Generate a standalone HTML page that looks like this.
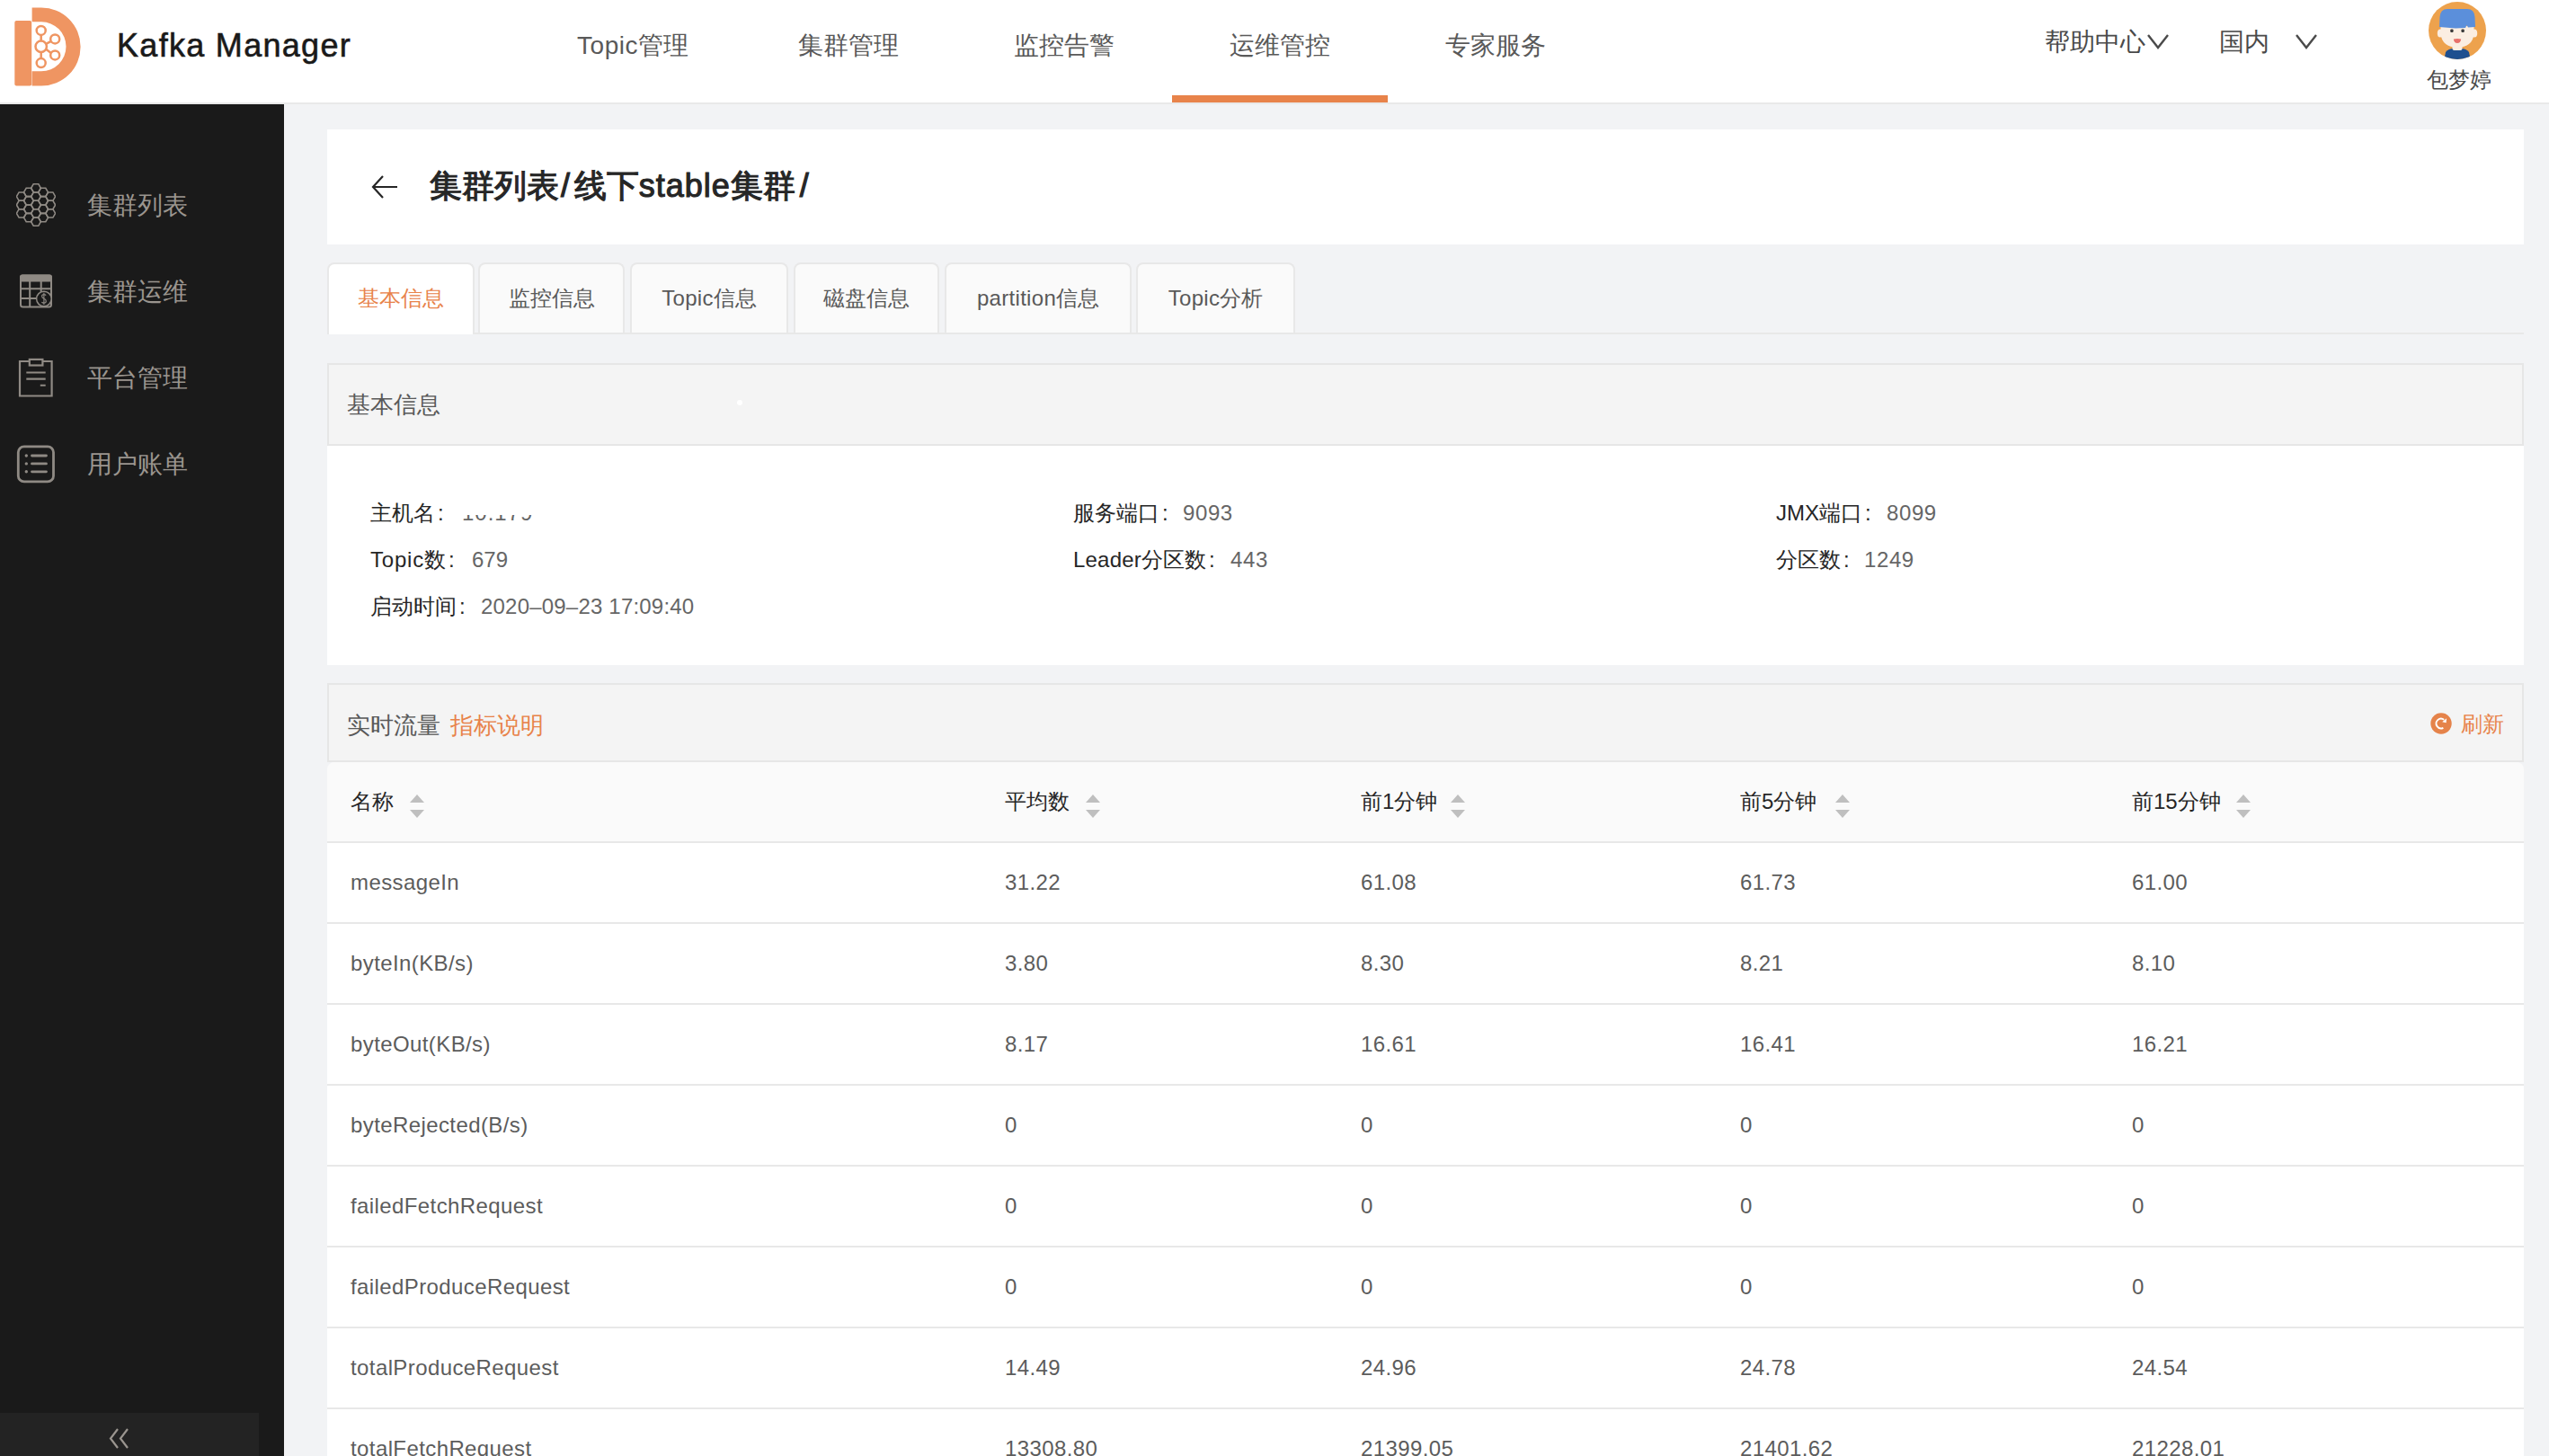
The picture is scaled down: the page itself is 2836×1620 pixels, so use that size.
<!DOCTYPE html>
<html><head><meta charset="utf-8">
<style>
*{box-sizing:border-box;margin:0;padding:0}
html,body{width:2836px;height:1620px;overflow:hidden;background:#f2f3f5;font-family:"Liberation Sans",sans-serif;}
.a{position:absolute}
.t{position:absolute;white-space:nowrap}
#hdr{left:0;top:0;width:2836px;height:116px;background:#fff;border-bottom:2px solid #e9e9e9}
#side{left:0;top:116px;width:316px;height:1504px;background:#1a1a1a}
.nav{top:3px;height:106px;line-height:96px;width:240px;text-align:center;font-size:28px;color:#595959;letter-spacing:0.5px}
.mi{left:97px;font-size:28px;color:#9a958f;height:40px;line-height:40px}
.card{background:#fff}
.tab{top:292px;height:78px;border:2px solid #e8e8e8;border-bottom:none;border-radius:8px 8px 0 0;background:#fafafa;font-size:24px;color:#595959;text-align:center;line-height:75px;letter-spacing:0.3px}
.tab.on{background:#fff;color:#e8834a;height:80px}
.lab{font-size:24px;color:#262626;height:30px;line-height:30px}
.val{color:#666}
.th{top:877px;font-size:24px;color:#262626;height:30px;line-height:30px}
.td{font-size:24px;color:#5c5c5c;height:30px;line-height:30px;letter-spacing:0.4px}
.rowb{left:364px;width:2444px;height:2px;background:#e8e8e8}
.sort{width:16px;height:26px}
.k{display:inline-block;width:1em;text-align:center;font-style:normal;letter-spacing:0}
</style></head><body>

<!-- HEADER -->
<div id="hdr" class="a">
  <svg class="a" style="left:0;top:0" width="100" height="110" viewBox="0 0 100 110">
    <rect x="16.3" y="23.1" width="18.9" height="72.5" rx="2" fill="#ef9562"/>
    <path d="M35.6 8.4 H46 A43.6 43.6 0 0 1 46 95.6 H35.6 V79.3 H46 A27.5 27.5 0 0 0 46 24.3 H35.6 Z" fill="#ef9562"/>
    <g fill="none" stroke="#ef9562" stroke-width="2.5">
      <circle cx="45.7" cy="51.8" r="6.2"/>
      <circle cx="45.7" cy="33.9" r="5"/>
      <circle cx="45.7" cy="70.1" r="5"/>
      <circle cx="61.2" cy="43.4" r="5"/>
      <circle cx="61.2" cy="61.4" r="5"/>
      <path d="M45.7 38.9 V45.6 M45.7 58 V65.1 M51.2 48.8 L56.8 45.8 M51.2 54.8 L56.8 58.9"/>
    </g>
  </svg>
  <div class="t" style="left:130px;top:30px;font-size:36px;color:#1a1a1a;letter-spacing:1.3px;line-height:42px;-webkit-text-stroke:0.6px #1a1a1a">Kafka Manager</div>
  <div class="t nav" style="left:584px">Topic<i class="k">管</i><i class="k">理</i></div>
  <div class="t nav" style="left:824px"><i class="k">集</i><i class="k">群</i><i class="k">管</i><i class="k">理</i></div>
  <div class="t nav" style="left:1064px"><i class="k">监</i><i class="k">控</i><i class="k">告</i><i class="k">警</i></div>
  <div class="t nav" style="left:1304px"><i class="k">运</i><i class="k">维</i><i class="k">管</i><i class="k">控</i></div>
  <div class="t nav" style="left:1544px"><i class="k">专</i><i class="k">家</i><i class="k">服</i><i class="k">务</i></div>
  <div class="a" style="left:1304px;top:106px;width:240px;height:8px;background:#e8834a"></div>

  <div class="t" style="left:2275px;top:29px;font-size:28px;color:#4a4a4a;line-height:36px"><i class="k">帮</i><i class="k">助</i><i class="k">中</i><i class="k">心</i></div>
  <svg class="a" style="left:2388px;top:37px" width="26" height="18" viewBox="0 0 26 18"><path d="M2 2 L13 16 L24 2" fill="none" stroke="#4a4a4a" stroke-width="2.4"/></svg>
  <div class="t" style="left:2469px;top:29px;font-size:28px;color:#4a4a4a;line-height:36px"><i class="k">国</i><i class="k">内</i></div>
  <svg class="a" style="left:2553px;top:37px" width="26" height="18" viewBox="0 0 26 18"><path d="M2 2 L13 16 L24 2" fill="none" stroke="#4a4a4a" stroke-width="2.4"/></svg>

  <svg class="a" style="left:2702px;top:2px" width="64" height="64" viewBox="0 0 64 64">
    <defs><clipPath id="cc"><circle cx="32" cy="32" r="32"/></clipPath></defs>
    <g clip-path="url(#cc)">
      <rect width="64" height="64" fill="#eda24d"/>
      <path d="M17 66 L19 56 Q22 52 28 52 L36 52 Q42 52 45 56 L47 66 Z" fill="#1e4f8f"/>
      <rect x="26.5" y="47" width="11" height="7" rx="2" fill="#fbeee2"/>
      <ellipse cx="13" cy="35" rx="3.2" ry="4.5" fill="#fbeee2"/>
      <ellipse cx="51" cy="35" rx="3.2" ry="4.5" fill="#fbeee2"/>
      <path d="M13.5 27 L13.5 36 Q15 50 32 51 Q49 50 50.5 36 L50.5 27 Z" fill="#fbeee2"/>
      <path d="M12 28 L12.5 17 Q13 8 21 8 L43 8 Q51 8 51.5 17 L52 28 L44 28.5 L42.5 26 L41 29 L30 29.5 Z" fill="#5b8fdb"/>
      <rect x="24.2" y="30.6" width="3.4" height="3.4" rx="1.2" fill="#3a3a3a"/>
      <rect x="36.4" y="30.6" width="3.4" height="3.4" rx="1.2" fill="#3a3a3a"/>
      <path d="M27.8 41.5 Q32 40.5 36.2 41.5 Q35.5 46 32 46 Q28.5 46 27.8 41.5 Z" fill="#e8706a"/>
    </g>
  </svg>
  <div class="t" style="left:2700px;top:73px;font-size:24px;color:#4a4a4a;line-height:32px;letter-spacing:-0.5px"><i class="k">包</i><i class="k">梦</i><i class="k">婷</i></div>
</div>

<!-- SIDEBAR -->
<div id="side" class="a">
  <svg class="a" style="left:18px;top:88px" width="44" height="48" viewBox="0 0 44 48">
    <g fill="none" stroke="#8f8a84" stroke-width="1.6"><polygon points="11.20,14.65 8.50,19.32 3.10,19.32 0.40,14.65 3.10,9.97 8.50,9.97"/><polygon points="11.20,24.00 8.50,28.68 3.10,28.68 0.40,24.00 3.10,19.32 8.50,19.32"/><polygon points="11.20,33.35 8.50,38.03 3.10,38.03 0.40,33.35 3.10,28.68 8.50,28.68"/><polygon points="19.30,9.97 16.60,14.65 11.20,14.65 8.50,9.97 11.20,5.29 16.60,5.29"/><polygon points="19.30,19.32 16.60,24.00 11.20,24.00 8.50,19.32 11.20,14.65 16.60,14.65"/><polygon points="19.30,28.68 16.60,33.35 11.20,33.35 8.50,28.68 11.20,24.00 16.60,24.00"/><polygon points="19.30,38.03 16.60,42.71 11.20,42.71 8.50,38.03 11.20,33.35 16.60,33.35"/><polygon points="27.40,5.29 24.70,9.97 19.30,9.97 16.60,5.29 19.30,0.62 24.70,0.62"/><polygon points="27.40,14.65 24.70,19.32 19.30,19.32 16.60,14.65 19.30,9.97 24.70,9.97"/><polygon points="27.40,24.00 24.70,28.68 19.30,28.68 16.60,24.00 19.30,19.32 24.70,19.32"/><polygon points="27.40,33.35 24.70,38.03 19.30,38.03 16.60,33.35 19.30,28.68 24.70,28.68"/><polygon points="27.40,42.71 24.70,47.38 19.30,47.38 16.60,42.71 19.30,38.03 24.70,38.03"/><polygon points="35.50,9.97 32.80,14.65 27.40,14.65 24.70,9.97 27.40,5.29 32.80,5.29"/><polygon points="35.50,19.32 32.80,24.00 27.40,24.00 24.70,19.32 27.40,14.65 32.80,14.65"/><polygon points="35.50,28.68 32.80,33.35 27.40,33.35 24.70,28.68 27.40,24.00 32.80,24.00"/><polygon points="35.50,38.03 32.80,42.71 27.40,42.71 24.70,38.03 27.40,33.35 32.80,33.35"/><polygon points="43.60,14.65 40.90,19.32 35.50,19.32 32.80,14.65 35.50,9.97 40.90,9.97"/><polygon points="43.60,24.00 40.90,28.68 35.50,28.68 32.80,24.00 35.50,19.32 40.90,19.32"/><polygon points="43.60,33.35 40.90,38.03 35.50,38.03 32.80,33.35 35.50,28.68 40.90,28.68"/></g>
  </svg>
  <div class="t mi" style="top:93px"><i class="k">集</i><i class="k">群</i><i class="k">列</i><i class="k">表</i></div>
  <svg class="a" style="left:20px;top:188px" width="42" height="42" viewBox="0 0 42 42">
    <g fill="none" stroke="#8f8a84" stroke-width="2">
      <rect x="3" y="2.5" width="34" height="35" rx="2.5"/>
      <path d="M3 17.25 H37 M3 28 H30 M13.2 8 V37.5 M25.7 8 V28"/>
    </g>
    <rect x="2" y="1.5" width="36" height="8" rx="2.5" fill="#8f8a84"/>
    <circle cx="28.9" cy="28.5" r="8.3" fill="#1a1a1a" stroke="#8f8a84" stroke-width="1.5"/>
    <path d="M31.2 24.6 Q30.3 23.6 28.9 23.6 Q26.6 23.6 26.6 25.6 Q26.6 27.4 28.9 28.3 Q31.3 29.2 31.3 31.1 Q31.3 33.2 28.9 33.2 Q27.3 33.2 26.4 32.2 M28.9 21.8 V35" fill="none" stroke="#8f8a84" stroke-width="1.1"/>
  </svg>
  <div class="t mi" style="top:189px"><i class="k">集</i><i class="k">群</i><i class="k">运</i><i class="k">维</i></div>
  <svg class="a" style="left:20px;top:282px" width="42" height="46" viewBox="0 0 42 46">
    <g fill="none" stroke="#8f8a84" stroke-width="2.2">
      <path d="M12.8 4 H2 V42.5 H37.6 V4 H27.4"/>
      <rect x="12.8" y="1.9" width="14.6" height="6.6"/>
      <path d="M9.3 16.5 H30.7 M9.3 23.6 H30.7 M24.8 30.75 H30.7"/>
    </g>
  </svg>
  <div class="t mi" style="top:285px"><i class="k">平</i><i class="k">台</i><i class="k">管</i><i class="k">理</i></div>
  <svg class="a" style="left:18px;top:378px" width="44" height="46" viewBox="0 0 44 46">
    <rect x="2.3" y="2.8" width="39.2" height="39.1" rx="6.5" fill="none" stroke="#8f8a84" stroke-width="2.8"/>
    <path d="M17.5 13 H33.5 M17.5 21.9 H33.5 M17.5 30.8 H33.5" fill="none" stroke="#8f8a84" stroke-width="2.8" stroke-linecap="round"/>
    <g fill="#8f8a84"><circle cx="11.3" cy="13" r="1.7"/><circle cx="11.3" cy="21.9" r="1.7"/><circle cx="11.3" cy="30.8" r="1.7"/></g>
  </svg>
  <div class="t mi" style="top:381px"><i class="k">用</i><i class="k">户</i><i class="k">账</i><i class="k">单</i></div>
  <div class="a" style="left:0;top:1456px;width:288px;height:48px;background:#232323"></div>
  <svg class="a" style="left:120px;top:1472px" width="28" height="26" viewBox="0 0 28 26">
    <path d="M11 2 L3 12.5 L11 23 M22 2 L14 12.5 L22 23" fill="none" stroke="#9a958f" stroke-width="2.2"/>
  </svg>
</div>

<!-- TITLE CARD -->
<div class="a card" style="left:364px;top:144px;width:2444px;height:128px"></div>
<svg class="a" style="left:412px;top:192px" width="32" height="32" viewBox="0 0 32 32">
  <path d="M30 16 H4 M14 4 L3 16 L14 28" fill="none" stroke="#262626" stroke-width="2.2"/>
</svg>
<div class="t" style="left:478px;top:186px;font-size:36px;font-weight:normal;color:#262626;line-height:42px;letter-spacing:0.75px;-webkit-text-stroke:1.1px #262626"><i class="k">集</i><i class="k">群</i><i class="k">列</i><i class="k">表</i><span style="margin:0 4px 0 2px">/</span><i class="k">线</i><i class="k">下</i><span style="letter-spacing:1px">stable</span><i class="k">集</i><i class="k">群</i><span style="margin:0 0 0 5px">/</span></div>

<!-- TABS -->
<div class="a" style="left:364px;top:370px;width:2444px;height:2px;background:#e8e8e8"></div>
<div class="t tab on" style="left:364px;width:164px"><i class="k">基</i><i class="k">本</i><i class="k">信</i><i class="k">息</i></div>
<div class="t tab" style="left:532px;width:163px"><i class="k">监</i><i class="k">控</i><i class="k">信</i><i class="k">息</i></div>
<div class="t tab" style="left:701px;width:176px">Topic<i class="k">信</i><i class="k">息</i></div>
<div class="t tab" style="left:883px;width:162px"><i class="k">磁</i><i class="k">盘</i><i class="k">信</i><i class="k">息</i></div>
<div class="t tab" style="left:1051px;width:208px">partition<i class="k">信</i><i class="k">息</i></div>
<div class="t tab" style="left:1264px;width:177px">Topic<i class="k">分</i><i class="k">析</i></div>

<!-- INFO CARD -->
<div class="a" style="left:364px;top:404px;width:2444px;height:92px;background:#f4f4f4;border:2px solid #e6e6e6"></div>
<div class="t" style="left:386px;top:435px;font-size:26px;color:#595959;line-height:30px"><i class="k">基</i><i class="k">本</i><i class="k">信</i><i class="k">息</i></div>
<div class="a card" style="left:364px;top:496px;width:2444px;height:244px"></div>
<div class="a" style="left:820px;top:445px;width:6px;height:6px;border-radius:3px;background:#fff"></div>
<div class="t lab" style="left:412px;top:556px"><i class="k">主</i><i class="k">机</i><i class="k">名</i><span style="margin-left:3px">:</span></div>
<div class="a" style="left:514px;top:573px;width:80px;height:6px;overflow:hidden"><div class="t" style="left:0;top:-17px;font-size:24px;line-height:30px;color:#666;letter-spacing:1px">10.179.3..</div></div>
<div class="t lab" style="left:412px;top:608px;letter-spacing:0.8px">Topic<i class="k">数</i><span style="margin-left:3px">:</span></div><div class="t lab val" style="left:525px;top:608px">679</div>
<div class="t lab" style="left:412px;top:660px"><i class="k">启</i><i class="k">动</i><i class="k">时</i><i class="k">间</i><span style="margin-left:3px">:</span></div><div class="t lab val" style="left:535px;top:660px;letter-spacing:0.2px">2020–09–23 17:09:40</div>
<div class="t lab" style="left:1194px;top:556px"><i class="k">服</i><i class="k">务</i><i class="k">端</i><i class="k">口</i><span style="margin-left:3px">:</span></div><div class="t lab val" style="left:1316px;top:556px;letter-spacing:0.6px">9093</div>
<div class="t lab" style="left:1194px;top:608px;letter-spacing:0.2px">Leader<i class="k">分</i><i class="k">区</i><i class="k">数</i><span style="margin-left:3px">:</span></div><div class="t lab val" style="left:1369px;top:608px;letter-spacing:0.6px">443</div>
<div class="t lab" style="left:1976px;top:556px">JMX<i class="k">端</i><i class="k">口</i><span style="margin-left:3px">:</span></div><div class="t lab val" style="left:2099px;top:556px;letter-spacing:0.6px">8099</div>
<div class="t lab" style="left:1976px;top:608px"><i class="k">分</i><i class="k">区</i><i class="k">数</i><span style="margin-left:3px">:</span></div><div class="t lab val" style="left:2074px;top:608px;letter-spacing:0.6px">1249</div>

<!-- FLOW CARD -->
<div class="a" style="left:364px;top:760px;width:2444px;height:88px;background:#f4f4f4;border:2px solid #e6e6e6;border-bottom:none"></div>
<div class="t" style="left:386px;top:792px;font-size:26px;color:#595959;line-height:30px"><i class="k">实</i><i class="k">时</i><i class="k">流</i><i class="k">量</i><span style="color:#e8834a;margin-left:11px"><i class="k">指</i><i class="k">标</i><i class="k">说</i><i class="k">明</i></span></div>
<svg class="a" style="left:2704px;top:793px" width="24" height="24" viewBox="0 0 24 24">
  <circle cx="12" cy="12" r="11.7" fill="#e5834a"/>
  <path d="M14.37 16.85 A5.4 5.4 0 1 1 15.2 7.7" fill="none" stroke="#fff" stroke-width="1.9"/>
  <path d="M18 6.2 L13.2 10.2 L17.6 11.3 Z" fill="#fff"/>
</svg>
<div class="t" style="left:2738px;top:791px;font-size:24px;color:#e8834a;line-height:30px"><i class="k">刷</i><i class="k">新</i></div>

<div class="a" style="left:364px;top:848px;width:2444px;height:88px;background:#fafafa;border-radius:8px 8px 0 0"></div>
<div class="a" style="left:364px;top:846px;width:2444px;height:2px;background:#e6e6e6"></div>
<div class="a" style="left:364px;top:938px;width:2444px;height:682px;background:#fff"></div>
<div class="rowb a" style="top:936px"></div>
<div class="rowb a" style="top:1026px"></div>
<div class="rowb a" style="top:1116px"></div>
<div class="rowb a" style="top:1206px"></div>
<div class="rowb a" style="top:1296px"></div>
<div class="rowb a" style="top:1386px"></div>
<div class="rowb a" style="top:1476px"></div>
<div class="rowb a" style="top:1566px"></div>
<div class="t th" style="left:390px"><i class="k">名</i><i class="k">称</i></div>
<svg class="a sort" style="left:456px;top:884px" viewBox="0 0 16 26"><path d="M8 0 L16 9 H0 Z M0 17 H16 L8 26 Z" fill="#bfbfbf"/></svg>
<div class="t th" style="left:1118px"><i class="k">平</i><i class="k">均</i><i class="k">数</i></div>
<svg class="a sort" style="left:1208px;top:884px" viewBox="0 0 16 26"><path d="M8 0 L16 9 H0 Z M0 17 H16 L8 26 Z" fill="#bfbfbf"/></svg>
<div class="t th" style="left:1514px"><i class="k">前</i>1<i class="k">分</i><i class="k">钟</i></div>
<svg class="a sort" style="left:1614px;top:884px" viewBox="0 0 16 26"><path d="M8 0 L16 9 H0 Z M0 17 H16 L8 26 Z" fill="#bfbfbf"/></svg>
<div class="t th" style="left:1936px"><i class="k">前</i>5<i class="k">分</i><i class="k">钟</i></div>
<svg class="a sort" style="left:2042px;top:884px" viewBox="0 0 16 26"><path d="M8 0 L16 9 H0 Z M0 17 H16 L8 26 Z" fill="#bfbfbf"/></svg>
<div class="t th" style="left:2372px"><i class="k">前</i>15<i class="k">分</i><i class="k">钟</i></div>
<svg class="a sort" style="left:2488px;top:884px" viewBox="0 0 16 26"><path d="M8 0 L16 9 H0 Z M0 17 H16 L8 26 Z" fill="#bfbfbf"/></svg>
<div class="t td" style="left:390px;top:967px">messageIn</div>
<div class="t td" style="left:1118px;top:967px">31.22</div>
<div class="t td" style="left:1514px;top:967px">61.08</div>
<div class="t td" style="left:1936px;top:967px">61.73</div>
<div class="t td" style="left:2372px;top:967px">61.00</div>
<div class="t td" style="left:390px;top:1057px">byteIn(KB/s)</div>
<div class="t td" style="left:1118px;top:1057px">3.80</div>
<div class="t td" style="left:1514px;top:1057px">8.30</div>
<div class="t td" style="left:1936px;top:1057px">8.21</div>
<div class="t td" style="left:2372px;top:1057px">8.10</div>
<div class="t td" style="left:390px;top:1147px">byteOut(KB/s)</div>
<div class="t td" style="left:1118px;top:1147px">8.17</div>
<div class="t td" style="left:1514px;top:1147px">16.61</div>
<div class="t td" style="left:1936px;top:1147px">16.41</div>
<div class="t td" style="left:2372px;top:1147px">16.21</div>
<div class="t td" style="left:390px;top:1237px">byteRejected(B/s)</div>
<div class="t td" style="left:1118px;top:1237px">0</div>
<div class="t td" style="left:1514px;top:1237px">0</div>
<div class="t td" style="left:1936px;top:1237px">0</div>
<div class="t td" style="left:2372px;top:1237px">0</div>
<div class="t td" style="left:390px;top:1327px">failedFetchRequest</div>
<div class="t td" style="left:1118px;top:1327px">0</div>
<div class="t td" style="left:1514px;top:1327px">0</div>
<div class="t td" style="left:1936px;top:1327px">0</div>
<div class="t td" style="left:2372px;top:1327px">0</div>
<div class="t td" style="left:390px;top:1417px">failedProduceRequest</div>
<div class="t td" style="left:1118px;top:1417px">0</div>
<div class="t td" style="left:1514px;top:1417px">0</div>
<div class="t td" style="left:1936px;top:1417px">0</div>
<div class="t td" style="left:2372px;top:1417px">0</div>
<div class="t td" style="left:390px;top:1507px">totalProduceRequest</div>
<div class="t td" style="left:1118px;top:1507px">14.49</div>
<div class="t td" style="left:1514px;top:1507px">24.96</div>
<div class="t td" style="left:1936px;top:1507px">24.78</div>
<div class="t td" style="left:2372px;top:1507px">24.54</div>
<div class="t td" style="left:390px;top:1597px">totalFetchRequest</div>
<div class="t td" style="left:1118px;top:1597px">13308.80</div>
<div class="t td" style="left:1514px;top:1597px">21399.05</div>
<div class="t td" style="left:1936px;top:1597px">21401.62</div>
<div class="t td" style="left:2372px;top:1597px">21228.01</div>

</body></html>
